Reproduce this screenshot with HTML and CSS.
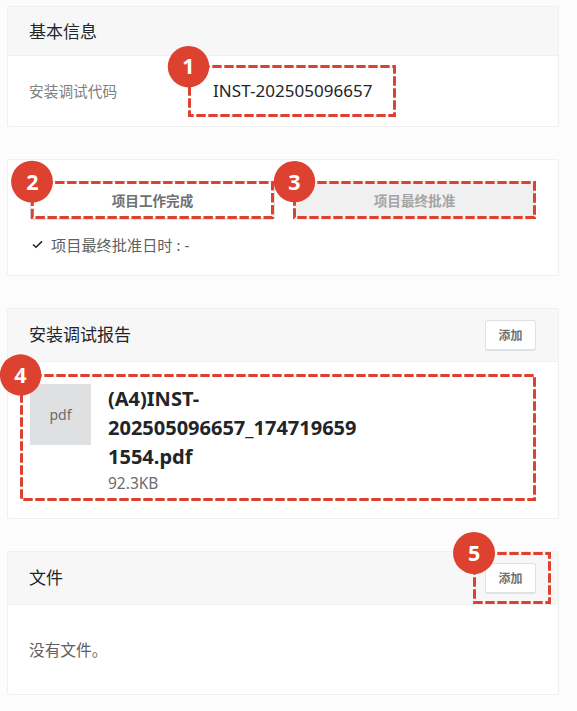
FILE: index.html
```html
<!DOCTYPE html>
<html lang="zh-CN">
<head>
<meta charset="utf-8">
<title>安装调试</title>
<link rel="stylesheet" href="styles.css">
</head>
<body>
<main class="page">
  <section class="card card-basic">
    <header class="card-header"><h2>基本信息</h2></header>
    <div class="card-body field">
      <span class="field-label">安装调试代码</span>
      <span class="field-value">INST-202505096657</span>
    </div>
  </section>

  <section class="card card-approval">
    <div class="actions">
      <button class="action">项目工作完成</button>
      <button class="action action-disabled" disabled>项目最终批准</button>
    </div>
    <p class="status">
      <svg class="check" viewBox="0 0 12 10"><path d="M1 5 4.3 8.1 11 1.5"/></svg>
      <span>项目最终批准日时 : -</span>
    </p>
  </section>

  <section class="card card-report">
    <header class="card-header"><h2>安装调试报告</h2><button class="add">添加</button></header>
    <div class="card-body file">
      <div class="thumb">pdf</div>
      <div class="file-info">
        <div class="file-name">(A4)INST-<br>202505096657_174719659<br>1554.pdf</div>
        <div class="file-size">92.3KB</div>
      </div>
    </div>
  </section>

  <section class="card card-files">
    <header class="card-header"><h2>文件</h2><button class="add">添加</button></header>
    <div class="card-body empty">没有文件。</div>
  </section>
</main>

<svg class="callouts" width="577" height="711" viewBox="0 0 577 711">
  <g class="frames">
    <rect x="189.5" y="66.5" width="205" height="49"/>
    <rect x="32.3" y="182.5" width="240.2" height="35"/>
    <rect x="294.5" y="182.5" width="240" height="35"/>
    <rect x="21.5" y="375.5" width="513" height="124"/>
    <rect x="474.5" y="553.5" width="75" height="49"/>
  </g>
  <g class="badges">
    <circle cx="188.5" cy="66.7" r="20.7"/><text x="188.5" y="74">1</text>
    <circle cx="32" cy="181.6" r="20.9"/><text x="32.3" y="189.8">2</text>
    <circle cx="294.5" cy="181.6" r="20.7"/><text x="294.5" y="189.8">3</text>
    <circle cx="20.6" cy="375" r="20.7"/><text x="20.5" y="382.8">4</text>
    <circle cx="474" cy="553" r="21"/><text x="474.2" y="560.8">5</text>
  </g>
</svg>
</body>
</html>
```
FILE: styles.css
```css
* { box-sizing: border-box; }

body {
  margin: 0;
  background: #fcfcfc;
  color: #212529;
  font-family: "Noto Sans", "Noto Sans CJK SC", sans-serif;
}

h2, p { margin: 0; font-weight: 400; }

.page {
  display: flex;
  flex-direction: column;
  gap: 32px;
  width: 552px;
  margin: 6px 0 0 7px;
}

.card {
  display: flex;
  flex-direction: column;
  background: #fff;
  border: 1px solid #f0f0f0;
  border-radius: 2px;
}

.card-basic { height: 121px; }
.card-approval { height: 117px; padding: 21px 21px 0 22px; }
.card-report { height: 211px; }
.card-files { height: 144px; }

.card-header {
  display: flex;
  flex: none;
  align-items: center;
  justify-content: space-between;
  height: 53px;
  padding: 0 22px 0 21px;
  background: #f7f7f7;
  border-bottom: 1px solid #f0f0f0;
}

.card-basic .card-header { height: 49px; padding-top: 2px; }
.card-header h2 { font-size: 17px; line-height: 24px; }
.card-body { flex: 1; padding-left: 21px; }

.field { display: flex; align-items: center; padding-bottom: 2px; }
.field-label { width: 184px; font-size: 14.7px; color: #808080; }
.field-value { font-size: 17px; letter-spacing: 0.04px; }

.actions { display: grid; grid-template-columns: 245px 243px; gap: 18px; }

.action {
  height: 39px;
  padding: 0;
  border: 1px solid #dfe3e8;
  border-bottom-width: 2px;
  border-radius: 3px;
  background: #fff;
  color: #707070;
  font: bold 13.6px "Noto Sans", "Noto Sans CJK SC", sans-serif;
}

.action-disabled { background: #f0f0f0; border-color: #f5f5f5; color: #a5a5a5; }

.status {
  display: flex;
  align-items: center;
  gap: 8px;
  height: 22px;
  margin: 13px 0 0 2px;
  font-size: 15.2px;
  color: #606060;
}

.check { width: 11px; height: 9px; fill: none; stroke: #222; stroke-width: 1.7; }

.add {
  width: 51px;
  height: 31px;
  padding: 0;
  border: 1px solid #dee2e6;
  border-bottom-width: 2px;
  border-radius: 3px;
  background: #fff;
  color: #707070;
  font: bold 12px "Noto Sans", "Noto Sans CJK SC", sans-serif;
}

.file { display: flex; gap: 17px; padding: 22px 0 0 22px; }

.thumb {
  display: flex;
  align-items: center;
  justify-content: center;
  width: 61px;
  height: 61px;
  background: #dee0e2;
  color: #6c6c6c;
  font-size: 14px;
}

.file-name { font-size: 20px; font-weight: 700; line-height: 29px; }
.file-size { font-size: 15.5px; line-height: 24px; color: #6c6c6c; }
.empty { display: flex; align-items: center; font-size: 15.7px; color: #606060; }

.callouts { position: absolute; top: 0; left: 0; pointer-events: none; }

.frames {
  fill: none;
  stroke: #dd412f;
  stroke-width: 3;
  stroke-dasharray: 9.4 2.6;
  stroke-dashoffset: 1.2;
}

.badges circle { fill: #dd412f; }
.badges text { fill: #fff; font-size: 21.5px; font-weight: 700; text-anchor: middle; }
```
